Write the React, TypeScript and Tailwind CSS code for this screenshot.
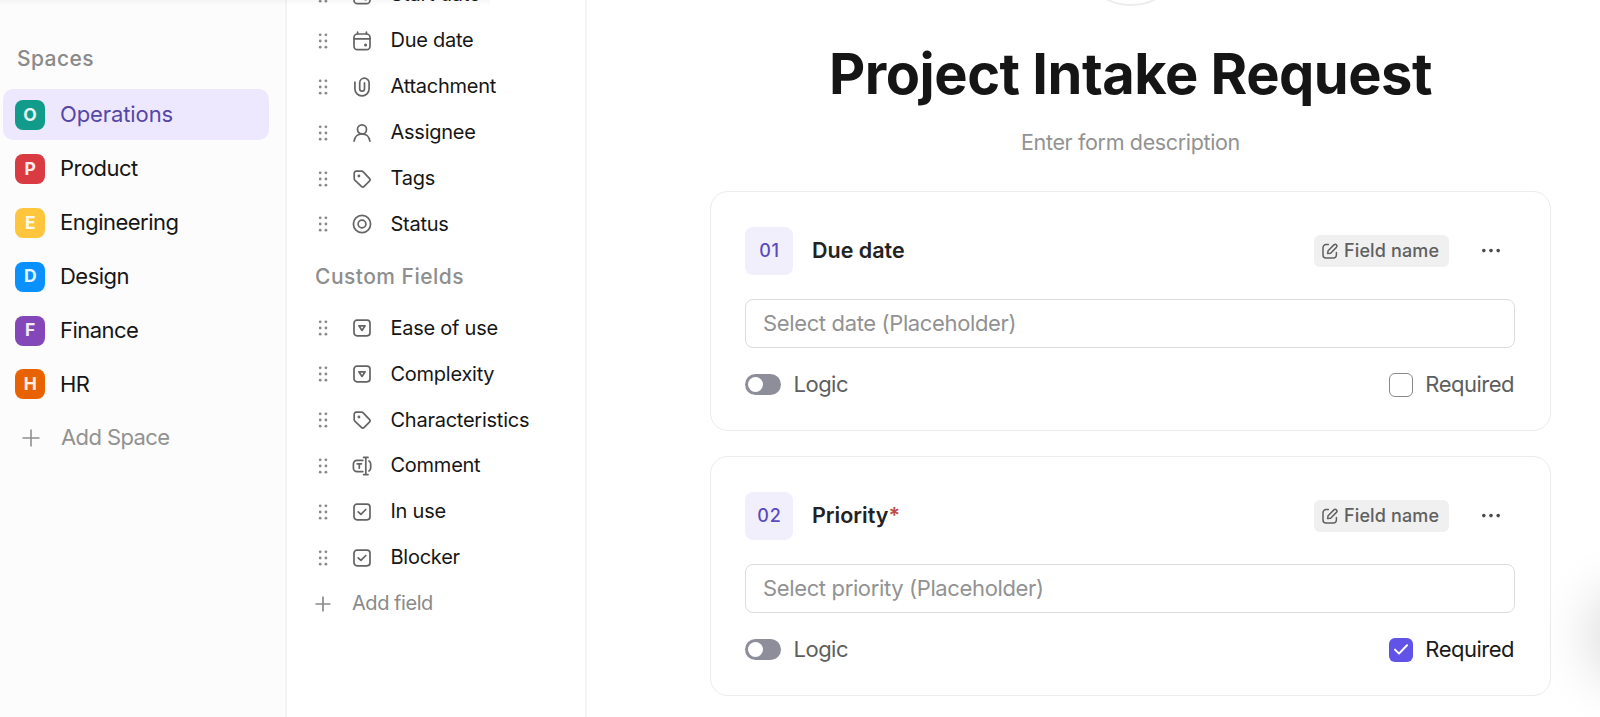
import type { ReactNode } from "react"

const spaces = [
  { letter: "O", name: "Operations", color: "bg-[#109b8b]", active: true },
  { letter: "P", name: "Product", color: "bg-[#da3b42]" },
  { letter: "E", name: "Engineering", color: "bg-[#ffc53d]" },
  { letter: "D", name: "Design", color: "bg-[#0991ff]" },
  { letter: "F", name: "Finance", color: "bg-[#8347b9]" },
  { letter: "H", name: "HR", color: "bg-[#e86300]" },
]

function Icon({ children }: { children: ReactNode }) {
  return (
    <svg
      className="size-5 shrink-0 overflow-visible text-[#646464]"
      viewBox="0 0 20 20"
      fill="none"
      stroke="currentColor"
      strokeWidth="1.7"
      strokeLinecap="round"
      strokeLinejoin="round"
    >
      {children}
    </svg>
  )
}

const CalendarIcon = () => (
  <Icon>
    <rect x="2" y="3" width="16" height="15.6" rx="3.4" />
    <path d="M2 7.8h16M5.6 1v2M14.4 1v2" />
    <circle cx="13.6" cy="14" r="0.7" fill="currentColor" />
  </Icon>
)

const ClipIcon = () => (
  <Icon>
    <path d="M2.9 5.2v6.6a7.1 7.1 0 0 0 14.2 0V5.9a4.7 4.7 0 0 0-9.4 0v5.9a2.4 2.4 0 0 0 4.8 0V5.9" />
  </Icon>
)

const PersonIcon = () => (
  <Icon>
    <circle cx="10" cy="6.4" r="4.5" />
    <path d="M2.1 18.1c.6-4.2 3.6-7.2 7.9-7.2s7.3 3 7.9 7.2" />
  </Icon>
)

const TagIcon = () => (
  <Icon>
    <path d="M2.2 4.2a2 2 0 0 1 2-2h5.6a2 2 0 0 1 1.4.6l6.2 6.6a2 2 0 0 1 0 2.8l-5.2 5.2a2 2 0 0 1-2.8 0l-6.6-6.2a2 2 0 0 1-.6-1.4z" />
    <circle cx="6.9" cy="7" r="0.6" fill="currentColor" />
  </Icon>
)

const StatusIcon = () => (
  <Icon>
    <circle cx="10" cy="10" r="8.6" />
    <circle cx="10" cy="10" r="3.9" />
  </Icon>
)

const DropdownIcon = () => (
  <Icon>
    <rect x="2" y="2.2" width="16" height="15.6" rx="3" />
    <path d="M6.9 7.8h6.2L10 12.4z" />
  </Icon>
)

const TextIcon = () => (
  <Icon>
    <path d="M10.8 4.4H5a3.6 3.6 0 0 0-3.6 3.6v4A3.6 3.6 0 0 0 5 15.6h5.8M17 5c1.2.7 1.7 1.7 1.7 3v4c0 1.3-.5 2.3-1.7 3" />
    <path d="M13.8 1.4v17.2M11.6 1.4h4.4M11.6 18.6h4.4M5.2 7.8h4.2M7.3 7.8v4.4" />
  </Icon>
)

const CheckIcon = () => (
  <Icon>
    <rect x="2" y="2.2" width="16" height="15.6" rx="3" />
    <path d="M6.2 9.8l2.7 2.6 4.9-4.9" />
  </Icon>
)

const Grip = () => (
  <svg className="h-4 w-[10px] shrink-0" viewBox="0 0 10 16" fill="#8a8a8a">
    {[1.8, 8, 14.2].map((y) => (
      <g key={y}>
        <circle cx="2.2" cy={y} r="1.4" />
        <circle cx="7.9" cy={y} r="1.4" />
      </g>
    ))}
  </svg>
)

const Plus = () => (
  <svg viewBox="0 0 18 18" className="size-[18px] shrink-0" stroke="#8f8f8f" strokeWidth="1.6">
    <path d="M9 0.5v17M0.5 9h17" />
  </svg>
)

function FieldRow({ icon, label }: { icon: ReactNode; label: string }) {
  return (
    <div className="flex h-[45.9px] shrink-0 items-center pl-[31px]">
      <Grip />
      <span className="ml-[24px] flex">{icon}</span>
      <span className="ml-[18.5px] pb-px text-[20px] tracking-[-0.25px] text-[#161616]">{label}</span>
    </div>
  )
}

function Sidebar() {
  return (
    <aside className="flex w-[287px] shrink-0 flex-col border-r-2 border-[#f3f3f3] bg-[#fcfcfc] pt-[43px]">
      <h2 className="pl-[17px] text-[21px] leading-8 font-medium tracking-[0.4px] text-[#8a8a8a]">Spaces</h2>
      <nav className="mt-[13px] flex flex-col">
        {spaces.map((s) => (
          <div key={s.name} className="flex h-[53.9px] items-center pl-[3px]">
            <div
              className={
                s.active
                  ? "flex h-[51px] w-[266px] items-center rounded-[10px] bg-[#ede8fe] pl-3 tracking-[-0.1px] text-[#5646a8]"
                  : "flex h-[51px] w-[266px] items-center pl-3 tracking-[-0.52px] text-[#161616]"
              }
            >
              <span
                className={`flex size-[30px] items-center justify-center rounded-[8px] text-[17.5px] font-bold text-white/90 ${s.color}`}
              >
                {s.letter}
              </span>
              <span className="ml-[15px] text-[22px]">{s.name}</span>
            </div>
          </div>
        ))}
        <div className="flex h-[53.9px] items-center pl-[22px] text-[22px] tracking-[-0.6px] text-[#929292]">
          <Plus />
          <span className="ml-[21px] pb-px">Add Space</span>
        </div>
      </nav>
    </aside>
  )
}

function FieldList() {
  return (
    <section className="flex w-[300px] shrink-0 flex-col border-r-2 border-[#f5f5f5]">
      <div className="-mt-[28px] flex flex-col">
        <FieldRow icon={<CalendarIcon />} label="Start date" />
        <FieldRow icon={<CalendarIcon />} label="Due date" />
        <FieldRow icon={<ClipIcon />} label="Attachment" />
        <FieldRow icon={<PersonIcon />} label="Assignee" />
        <FieldRow icon={<TagIcon />} label="Tags" />
        <FieldRow icon={<StatusIcon />} label="Status" />
      </div>
      <h2 className="flex h-[58px] shrink-0 items-center pl-[28px] text-[21px] font-medium tracking-[0.48px] text-[#8e8e8e]">
        Custom Fields
      </h2>
      <FieldRow icon={<DropdownIcon />} label="Ease of use" />
      <FieldRow icon={<DropdownIcon />} label="Complexity" />
      <FieldRow icon={<TagIcon />} label="Characteristics" />
      <FieldRow icon={<TextIcon />} label="Comment" />
      <FieldRow icon={<CheckIcon />} label="In use" />
      <FieldRow icon={<CheckIcon />} label="Blocker" />
      <div className="flex h-[45.9px] shrink-0 items-center pl-[28px] text-[20px] tracking-[-0.45px] text-[#8a8a8a]">
        <svg viewBox="0 0 16 16" className="size-4 shrink-0" stroke="#8a8a8a" strokeWidth="1.7">
          <path d="M8 0.5v15M0.5 8h15" />
        </svg>
        <span className="ml-[21px] pb-px">Add field</span>
      </div>
    </section>
  )
}

function QuestionCard(props: { number: string; title: string; placeholder: string; required?: boolean }) {
  const { number, title, placeholder, required } = props
  return (
    <div className="flex h-[240px] w-[841px] flex-col rounded-[18px] border-[1.5px] border-[#ececec] pt-[35px] pr-[35px] pl-[34px]">
      <div className="flex items-center">
        <span className="flex size-12 items-center justify-center rounded-[8px] bg-[#f2effd] pb-px pl-px text-[18px] font-medium tracking-[0.8px] text-[#5a4bbd]">
          {number}
        </span>
        <span className="ml-[19px] pb-px text-[21.5px] font-semibold text-[#222]">
          {title}
          {required && <span className="text-[#c04a48]">*</span>}
        </span>
        <span className="ml-auto flex h-8 w-[135px] items-center rounded-[6px] bg-[#f0f0f0] pl-2 text-[18px] font-medium tracking-[0.13px] text-[#606060]">
          <svg
            viewBox="0 0 16 16"
            className="mr-[6px] size-4 shrink-0 overflow-visible"
            fill="none"
            stroke="currentColor"
            strokeWidth="1.5"
            strokeLinecap="round"
            strokeLinejoin="round"
          >
            <path d="M6.4 1.6H4A3 3 0 0 0 1 4.6V12a3 3 0 0 0 3 3h7.4a3 3 0 0 0 3-3V9.6" />
            <path d="M5.6 10.6l.5-2.9 5.8-5.8a1.75 1.75 0 0 1 2.5 2.5l-5.8 5.8z" />
          </svg>
          <span className="pb-0.5">Field name</span>
        </span>
        <svg viewBox="0 0 20 6" className="mr-[14px] ml-[32px] h-[6px] w-5" fill="#4a4a4a">
          <circle cx="2.8" cy="2.6" r="1.8" />
          <circle cx="10" cy="2.6" r="1.8" />
          <circle cx="17.2" cy="2.6" r="1.8" />
        </svg>
      </div>
      <div className="mt-6 flex h-[49px] items-center rounded-[8px] border-[1.5px] border-[#dcdcdc] pl-[17px] text-[22px] tracking-[-0.36px] text-[#929292]">
        {placeholder}
      </div>
      <div className="mt-[24px] flex h-[25px] items-center pr-px text-[22px] tracking-[-0.5px] text-[#5e5e5e]">
        <span className="flex h-[21px] w-[36px] items-center rounded-full bg-[#8d8e9a] pl-[3px]">
          <span className="size-[15px] rounded-full bg-white" />
        </span>
        <span className="ml-[12.5px]">Logic</span>
        {required ? (
          <span className="ml-auto flex size-6 items-center justify-center rounded-[6px] bg-[#6152e8]">
            <svg viewBox="0 0 14 11" className="h-[11px] w-[14px]" fill="none" stroke="#fff" strokeWidth="2" strokeLinecap="round" strokeLinejoin="round">
              <path d="M1 5.6l4 4L13 1.2" />
            </svg>
          </span>
        ) : (
          <span className="ml-auto size-6 rounded-[6px] border-[1.5px] border-[#8a8a8a]" />
        )}
        <span className={required ? "ml-[12px] text-[#1a1a1a]" : "ml-[12px]"}>Required</span>
      </div>
    </div>
  )
}

export default function App() {
  return (
    <div className="relative flex h-[717px] w-[1600px] overflow-hidden bg-white font-['Inter',sans-serif]">
      <Sidebar />
      <FieldList />
      <main className="flex flex-1 flex-col pl-[123px]">
        <div className="flex w-[841px] flex-col items-center">
          <div className="-mt-[102px] size-[108px] shrink-0 rounded-full border-2 border-[#ededed]" />
          <h1 className="mt-[33px] text-[56px] leading-[70px] font-bold tracking-[-0.5px] whitespace-nowrap text-[#151515]">
            Project Intake Request
          </h1>
          <p className="mt-[16px] text-[21.5px] leading-[34px] tracking-[-0.35px] text-[#929292]">Enter form description</p>
        </div>
        <div className="mt-[32px] flex flex-col gap-[25px]">
          <QuestionCard number="01" title="Due date" placeholder="Select date (Placeholder)" />
          <QuestionCard number="02" title="Priority" placeholder="Select priority (Placeholder)" required />
        </div>
      </main>
      {/* header shadow and floating button shadow */}
      <div className="absolute top-0 left-0 h-[6px] w-[490px] bg-linear-to-b from-black/3 to-transparent" />
      <div className="absolute top-[606px] -right-[68px] size-[60px] rounded-full shadow-[0_0_60px_12px_rgba(0,0,0,0.2)]" />
    </div>
  )
}
